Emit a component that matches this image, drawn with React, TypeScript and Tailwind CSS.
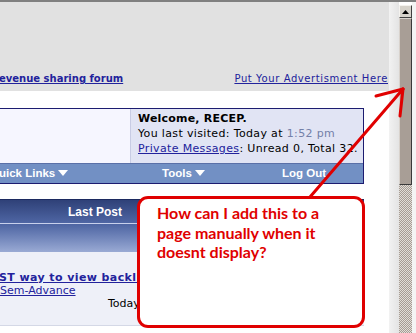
import React from 'react';

const verdana = { fontFamily: '"DejaVu Sans", Verdana, sans-serif' };
const tahoma = { fontFamily: '"Liberation Sans", Arial, sans-serif' };
const callFont = { fontFamily: 'Lato, "Open Sans", sans-serif' };

const Caret = () => (
  <svg width="10" height="6" viewBox="0 0 10 6" className="inline-block ml-[3px] mb-[1px]">
    <polygon points="0,0 10,0 5,6" fill="#ffffff" />
  </svg>
);

const Scrollbar: React.FC = () => (
  <div className="flex flex-col h-full w-[13px]">
    {/* up arrow */}
    <div className="h-[13px] mt-[3px] bg-[#d6d2ca] border border-[#404040] border-t-[#f4f2ee] border-l-[#f4f2ee] flex items-center justify-center">
      <svg width="7" height="4" viewBox="0 0 7 4">
        <polygon points="3.5,0 7,4 0,4" fill="#000" />
      </svg>
    </div>
    {/* thumb */}
    <div className="h-[167px] bg-[#a89e96] border border-[#3a3a3a] border-t-[#d8d2cc] border-l-[#d8d2cc]" />
    {/* track */}
    <div className="flex-1 bg-[repeating-conic-gradient(#a69c94_0_25%,#e2ded8_0_50%)] bg-[length:2px_2px]" />
  </div>
);

export default function App() {
  return (
    <div className="relative w-[416px] h-[333px] overflow-hidden bg-white flex flex-col">
      <div className="h-[2px] bg-[#808080] shrink-0" />
      <div className="flex flex-1 min-h-0">
        {/* page content */}
        <div className="w-[389px] flex flex-col bg-white" style={verdana}>
          <div className="h-[89px] bg-[#e1e1e1] flex items-end justify-between pb-[6px] text-[10px] leading-[12px] text-[#22229c]">
            <a className="font-bold underline -ml-[1px]">evenue sharing forum</a>
            <a className="underline pr-[1px] tracking-[0.6px]">Put Your Advertisment Here</a>
          </div>

          {/* welcome block */}
          <div className="mt-[17px] w-[364px] border-t border-r border-b border-[#1c1c70]">
            <div className="flex h-[54px]">
              <div className="w-[130px] bg-[#f6f6ff]" />
              <div className="flex-1 overflow-hidden whitespace-nowrap bg-[#e1e4f4] border-l border-[#c8cce4] pl-[7px] pt-[2px] text-[11px] leading-[15px] tracking-[0.35px] text-black">
                <div className="font-bold tracking-[0.2px]">Welcome, RECEP.</div>
                <div>You last visited: Today at <span className="text-[#7380a8]">1:52 pm</span></div>
                <div><span className="underline text-[#22229c]">Private Messages</span>: Unread 0, Total 32.</div>
              </div>
            </div>
            <div className="h-[20px] bg-[#7290c4] border-t border-[#5a70a8] flex items-center text-white font-bold text-[11.5px]" style={tahoma}>
              <span className="w-[163px] -ml-[1px]">uick Links<Caret /></span>
              <span className="w-[120px]">Tools<Caret /></span>
              <span>Log Out</span>
            </div>
          </div>

          {/* forum table */}
          <div className="mt-[15px] w-[364px] flex flex-col">
            <div className="h-[24px] bg-gradient-to-b from-[#2f4178] to-[#4f66a4] border-t border-[#1c2a60] flex items-center text-white font-bold text-[12px]" style={tahoma}>
              <span className="ml-[68px]">Last Post</span>
            </div>
            <div className="h-[1px] bg-[#c8d0ec]" />
            <div className="h-[28px] bg-gradient-to-b from-[#4d64a2] to-[#9aaad4]" />
            <div className="h-[74px] bg-[#eef0f8] border-b border-[#d4d8e6] text-[11px] pt-[19px]">
              <div className="font-bold underline text-[#22229c] text-[11px] leading-[13px] tracking-[0.4px] -ml-[1px]">ST way to view backlinks</div>
              <div className="underline text-[#22229c] leading-[13px]">Sem-Advance</div>
              <div className="pl-[108px] leading-[13px] text-black">Today</div>
            </div>
          </div>
        </div>

        {/* light strip beside scrollbar */}
        <div className="w-[10px] bg-gradient-to-r from-[#f2f2f2] to-[#e4e4e4]" />
        <Scrollbar />
        <div className="flex-1 bg-[#f4f4f4]" />
      </div>

      {/* callout annotation */}
      <div
        className="absolute left-[137px] top-[196px] w-[228px] h-[132px] bg-white border-[3px] border-[#e00000] rounded-[11px] pl-[17px] pt-[4px] text-[#e00000] text-[16px] leading-[19.5px] font-bold"
        style={callFont}
      >
        How can I add this to a<br />
        page manually when it<br />
        doesnt display?
      </div>

      {/* red arrow */}
      <svg className="absolute left-0 top-0 pointer-events-none" width="416" height="333" viewBox="0 0 416 333">
        <g stroke="#e00000" strokeWidth="3" strokeLinecap="round" fill="none">
          <line x1="310" y1="197" x2="403" y2="89" />
          <line x1="403" y1="89" x2="376" y2="96" />
          <line x1="403" y1="89" x2="400" y2="116" />
        </g>
      </svg>
    </div>
  );
}
